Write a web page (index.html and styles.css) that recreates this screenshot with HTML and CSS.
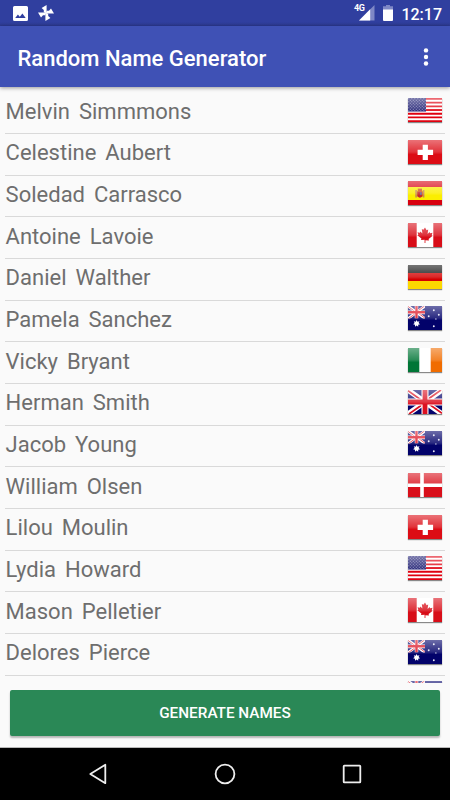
FILE: index.html
```html
<!DOCTYPE html>
<html lang="en">
<head>
    <meta charset="UTF-8">
    <meta name="viewport" content="width=device-width, initial-scale=1.0">
    <title>Random Name Generator</title>
    <link rel="stylesheet" href="styles.css">
</head>
<body>
    <!-- Flag artwork, shared by the rows -->
    <svg class="defs" width="0" height="0">
        <defs>
            <linearGradient id="gloss" x1="0" y1="0" x2="0" y2="1">
                <stop offset="0" stop-color="#fff" stop-opacity=".42"/>
                <stop offset=".5" stop-color="#fff" stop-opacity=".16"/>
                <stop offset=".6" stop-color="#fff" stop-opacity="0"/>
            </linearGradient>
            <pattern id="dots" width="3" height="3" patternUnits="userSpaceOnUse">
                <rect width="1" height="1" x=".3" y=".3" fill="#8c8cbc"/>
                <rect width="1" height="1" x="1.8" y="1.8" fill="#8c8cbc"/>
            </pattern>
            <symbol id="us" viewBox="0 0 34 24">
                <rect width="34" height="24" fill="#fff"/>
                <path d="M0 .9h34M0 4.6h34M0 8.3h34M0 12h34M0 15.7h34M0 19.4h34M0 23.1h34" stroke="#e0000f" stroke-width="1.85"/>
                <rect width="18" height="13.5" fill="#12126a"/>
                <rect width="18" height="13.5" fill="url(#dots)"/>
            </symbol>
            <symbol id="ch" viewBox="0 0 34 24">
                <rect width="34" height="24" fill="#dc0c15"/>
                <path d="M14.7 4.7h5.2v5h5.2v5.2h-5.2v5h-5.2v-5H9.6V9.7h5.1z" fill="#fff"/>
            </symbol>
            <symbol id="es" viewBox="0 0 34 24">
                <rect width="34" height="24" fill="#d8000f"/>
                <rect y="6" width="34" height="13" fill="#fbee00"/>
                <path d="M7.3 9h1.6v7.5H7.3zM14.8 9h1.6v7.5h-1.6z" fill="#c98a50"/>
                <path d="M9.2 10.3h5.4v5q-2.7 2.8-5.4 0z" fill="#c4282c"/>
                <path d="M9.8 7.6h4.2v2.4H9.8z" fill="#d0551c"/>
                <path d="M12 11.3h1.8v2.6H12z" fill="#6e6a8e"/>
            </symbol>
            <symbol id="ca" viewBox="0 0 34 24">
                <rect width="34" height="24" fill="#fff"/>
                <path d="M0 0h8.7v24H0zM25.3 0H34v24h-8.7z" fill="#d80d18"/>
                <path d="M17 4.5l1.6 2.7 1.6-.7-.6 4.4 2-1.9.5 1.2 2.4-.4-.8 2.4 1 .6-4.1 3.3.4 1.5-3.6-.4V20h-.8v-3.3l-3.6.4.4-1.5-4.1-3.3 1-.6-.8-2.4 2.4.4.5-1.2 2 1.9-.6-4.4 1.6.7z" fill="#d80d18"/>
            </symbol>
            <symbol id="de" viewBox="0 0 34 24">
                <rect width="34" height="24" fill="#111"/>
                <rect y="8" width="34" height="8" fill="#d50000"/>
                <rect y="16" width="34" height="8" fill="#fcd900"/>
            </symbol>
            <symbol id="ie" viewBox="0 0 34 24">
                <rect width="34" height="24" fill="#fff"/>
                <rect width="11.3" height="24" fill="#007636"/>
                <rect x="22.7" width="11.3" height="24" fill="#f06c00"/>
            </symbol>
            <symbol id="gb" viewBox="0 0 34 24" preserveAspectRatio="none">
                <rect width="34" height="24" fill="#04046c"/>
                <path d="M0 0l34 24M34 0L0 24" stroke="#fff" stroke-width="5.2"/>
                <path d="M0 .8L17 12.8M34 23.2L17 11.2M33 0L16 12M1 24L18 12" stroke="#dc1020" stroke-width="1.7"/>
                <path d="M17 0v24M0 12h34" stroke="#fff" stroke-width="7"/>
                <path d="M17 0v24M0 12h34" stroke="#dc1020" stroke-width="4.8"/>
            </symbol>
            <symbol id="au" viewBox="0 0 34 24">
                <rect width="34" height="24" fill="#02026a"/>
                <use href="#gb" width="17" height="12.6"/>
                <path d="M8.6 14l.9 1.7 2-.5-.9 1.8 1.5 1.2-1.9.5v2l-1.6-1.2L7 20.7v-2l-1.9-.5L6.6 17l-.8-1.8 1.9.5z" fill="#fff"/>
                <g fill="#e6e6f5">
                    <circle cx="25.8" cy="4.3" r=".95"/>
                    <circle cx="20.7" cy="10.2" r=".95"/>
                    <circle cx="30.8" cy="8.8" r=".95"/>
                    <circle cx="27.9" cy="13" r=".65"/>
                    <circle cx="25.8" cy="20.2" r=".95"/>
                </g>
            </symbol>
            <symbol id="dk" viewBox="0 0 34 24">
                <rect width="34" height="24" fill="#d90f1a"/>
                <path d="M14 0v24M0 12.2h34" stroke="#fff" stroke-width="3.6"/>
            </symbol>
        </defs>
    </svg>

    <div class="screen">
        <!-- Status bar -->
        <div class="status">
            <svg width="15" height="15" viewBox="0 0 15 15">
                <path fill="#fff" fill-rule="evenodd" d="M1.5 0h12Q15 0 15 1.5v12q0 1.5-1.5 1.5h-12Q0 15 0 13.5v-12Q0 0 1.5 0zM2.2 12h10.5L9.4 7.4l-2.6 3.3-1.9-2.1z"/>
            </svg>
            <svg class="pinwheel" width="16" height="16" viewBox="0 0 16 16">
                <g fill="#fff">
                    <path id="blade" d="M8.6 8.2V0L3.6 3l2.2 2v2.2z"/>
                    <use href="#blade" transform="rotate(90 8 8)"/>
                    <use href="#blade" transform="rotate(180 8 8)"/>
                    <use href="#blade" transform="rotate(270 8 8)"/>
                </g>
            </svg>
            <div class="status-right">
                <span class="network">4G</span>
                <svg class="signal" width="16" height="16" viewBox="0 0 16 16">
                    <path fill="#7f88c6" d="M15.5 0v15.5H0z"/>
                    <path fill="#fff" d="M11.2 4.3v11.2H0z"/>
                </svg>
                <svg class="battery" width="10" height="16" viewBox="0 0 10 16">
                    <path fill="#7f88c6" d="M3 0h4v1.3h3V5H0V1.3h3z"/>
                    <path fill="#fff" d="M0 4.5h10V15q0 1-1 1H1q-1 0-1-1z"/>
                </svg>
                <span class="clock">12:17</span>
            </div>
        </div>

        <header class="toolbar">
            <h1>Random Name Generator</h1>
            <svg width="6" height="20" viewBox="0 0 6 20">
                <g fill="#fff">
                    <circle cx="3" cy="3.4" r="2.2"/>
                    <circle cx="3" cy="10" r="2.2"/>
                    <circle cx="3" cy="16.5" r="2.2"/>
                </g>
            </svg>
        </header>

        <ul class="names" id="nameList"></ul>

        <div class="actions">
            <button class="button" type="button">GENERATE NAMES</button>
        </div>

        <!-- System navigation -->
        <nav class="navbar">
            <svg width="20" height="22" viewBox="0 0 20 22">
                <path d="M17.3 1.8v18.4L2.3 11z"/>
            </svg>
            <svg width="22" height="22" viewBox="0 0 22 22">
                <circle cx="11" cy="11" r="9.4"/>
            </svg>
            <svg width="20" height="20" viewBox="0 0 20 20">
                <rect x="1.7" y="1.7" width="16.6" height="16.6" rx=".6"/>
            </svg>
        </nav>
    </div>

    <script>
        const people = [
            { first: "Melvin", last: "Simmmons", flag: "us" },
            { first: "Celestine", last: "Aubert", flag: "ch" },
            { first: "Soledad", last: "Carrasco", flag: "es" },
            { first: "Antoine", last: "Lavoie", flag: "ca" },
            { first: "Daniel", last: "Walther", flag: "de" },
            { first: "Pamela", last: "Sanchez", flag: "au" },
            { first: "Vicky", last: "Bryant", flag: "ie" },
            { first: "Herman", last: "Smith", flag: "gb" },
            { first: "Jacob", last: "Young", flag: "au" },
            { first: "William", last: "Olsen", flag: "dk" },
            { first: "Lilou", last: "Moulin", flag: "ch" },
            { first: "Lydia", last: "Howard", flag: "us" },
            { first: "Mason", last: "Pelletier", flag: "ca" },
            { first: "Delores", last: "Pierce", flag: "au" },
            { first: "", last: "", flag: "au" }
        ];

        // Fill the list, one row per person
        const list = document.getElementById('nameList');
        people.forEach(person => {
            const row = document.createElement('li');
            row.innerHTML = `
                <span class="name">${person.first} ${person.last}</span>
                <svg class="flag" viewBox="0 0 34 24" preserveAspectRatio="none">
                    <use href="#${person.flag}" width="34" height="24"/>
                    <rect width="34" height="24" fill="url(#gloss)"/>
                </svg>
            `;
            list.appendChild(row);
        });
    </script>
</body>
</html>
```
FILE: styles.css
```css
body {
    font-family: Roboto, sans-serif;
    margin: 0;
    background-color: #fafafa;
}
.defs {
    position: absolute;
}
.screen {
    display: flex;
    flex-direction: column;
    width: 450px;
    height: 800px;
    overflow: hidden;
}
.status {
    display: flex;
    flex: none;
    align-items: center;
    box-sizing: border-box;
    height: 26px;
    padding: 0 9px 0 13px;
    background: linear-gradient(#303f9f 22px, #2c3990);
    color: #fff;
}
.pinwheel {
    margin-left: 10px;
}
.status-right {
    display: flex;
    align-items: center;
    margin-left: auto;
}
.network {
    align-self: flex-start;
    margin: 1px -5px 0 0;
    font-size: 9px;
    font-weight: bold;
    letter-spacing: -0.4px;
    line-height: 9px;
}
.battery {
    margin: 0 8px 0 8px;
}
.clock {
    font-size: 16px;
    font-weight: 500;
    line-height: 18px;
    margin-top: 3px;
    margin-right: -1px;
}
.toolbar {
    display: flex;
    flex: none;
    align-items: center;
    justify-content: space-between;
    box-sizing: border-box;
    height: 61px;
    padding: 0 21px 0 17.5px;
    background-color: #3f51b5;
    box-shadow: 0 1px 4px rgba(0, 0, 0, 0.4);
    color: #fff;
}
.toolbar h1 {
    margin: 3px 0 0;
    font-size: 22px;
    font-weight: 500;
}
.names {
    flex: none;
    box-sizing: border-box;
    height: 596px;
    margin: 0;
    padding: 5.4px 5px 0;
    overflow: hidden;
    list-style: none;
}
.names li {
    display: flex;
    align-items: flex-start;
    justify-content: space-between;
    box-sizing: border-box;
    height: 41.68px;
    padding: 5.6px 3px 0 0.6px;
    border-bottom: 1px solid #d9d9d9;
}
.name {
    margin-top: 0.7px;
    color: #6e6e6e;
    font-size: 22px;
    line-height: 26px;
    word-spacing: 3.5px;
}
.flag {
    width: 34px;
    height: 24px;
    box-shadow: 0 1px 1px rgba(0, 0, 0, 0.45);
}
.actions {
    flex: none;
    box-sizing: border-box;
    height: 65px;
    padding: 7px 10px 0;
    border-bottom: 1px solid #b8b8b8;
}
.button {
    display: block;
    width: 100%;
    height: 46px;
    padding: 0;
    border: 0;
    border-radius: 2px;
    background-color: #2a8856;
    box-shadow: 0 2px 2px rgba(0, 0, 0, 0.28);
    color: #fff;
    font-family: Roboto, sans-serif;
    font-size: 15.3px;
    font-weight: 500;
}
.navbar {
    display: flex;
    flex: 1;
    align-items: center;
    justify-content: space-between;
    padding: 0 88px;
    background-color: #000;
}
.navbar svg {
    fill: none;
    stroke: #eee;
    stroke-width: 1.8;
    stroke-linejoin: round;
}
```
